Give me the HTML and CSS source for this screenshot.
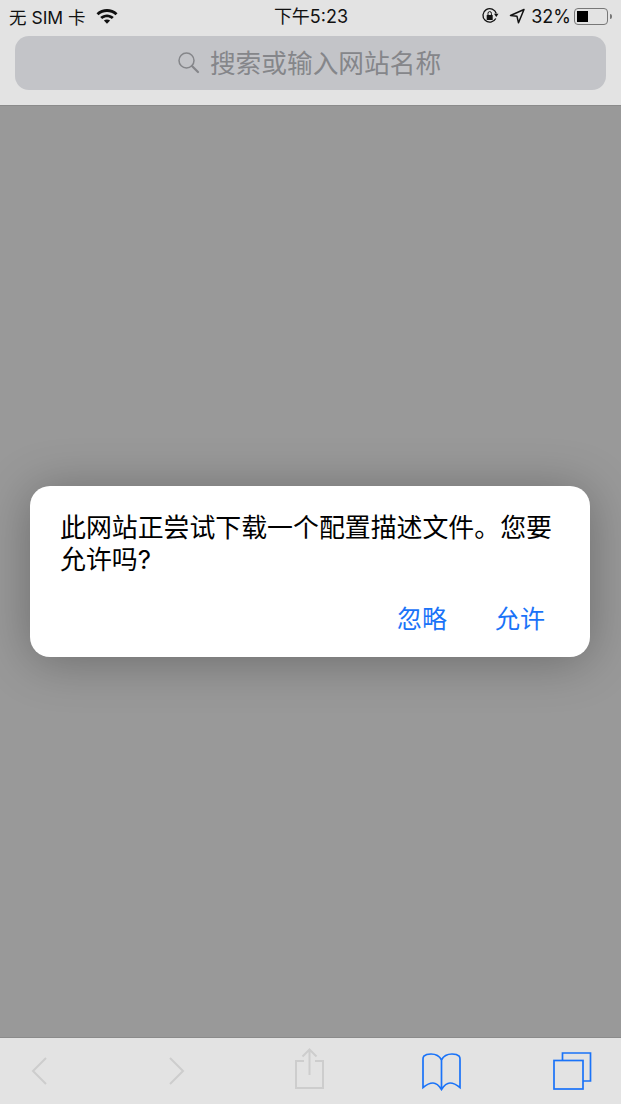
FILE: index.html
```html
<!DOCTYPE html>
<html lang="zh-CN">
<head>
    <meta charset="UTF-8">
    <meta name="viewport" content="width=device-width, initial-scale=1.0">
    <title>Safari</title>
    <link rel="stylesheet" href="styles.css">
</head>
<body>
    <header class="top-bar">
        <div class="status-bar">
            <div class="status-left">
                <span>无 SIM 卡</span>
                <svg class="wifi" width="22" height="16" viewBox="0 0 22 16">
                    <path d="M.5 5.2C6.500-.4 15.500-.4 21.500 5.200l-2 2.100C14.500 3 7.500 3 2.500 7.300z"/>
                    <path d="M4.200 9C8.200 5.500 13.800 5.500 17.800 9l-2 2.100C12.900 8.700 9.100 8.700 6.200 11.100z"/>
                    <path d="M7.900 12.500c1.900-1.400 4.300-1.400 6.200 0L11 15.800z"/>
                </svg>
            </div>
            <div class="status-time">下午5:23</div>
            <div class="status-right">
                <svg class="lock" width="18" height="18" viewBox="0 0 18 18">
                    <path d="M14.800 11.500A6.800 6.800 0 1 1 15.300 6.500" fill="none" stroke="#111" stroke-width="1.300"/>
                    <path d="M13 6.800h4.500L15.300 10z" fill="#111"/>
                    <rect x="5.700" y="8" width="6" height="5" rx=".6" fill="#111"/>
                    <path d="M7 8V6.300a1.700 1.700 0 0 1 3.400 0V8" fill="none" stroke="#111" stroke-width="1"/>
                </svg>
                <svg class="arrow" width="16" height="16" viewBox="0 0 16 16">
                    <path d="M15 1.500L1.500 7.500 8 8.300 9.500 14.800z" fill="none" stroke="#111" stroke-width="1.500" stroke-linejoin="round"/>
                </svg>
                <span class="percent">32%</span>
                <div class="battery"><div class="battery-level"></div></div>
                <div class="battery-tip"></div>
            </div>
        </div>
        <div class="search-box">
            <svg width="22" height="22" viewBox="0 0 22 22">
                <circle cx="8.500" cy="8.500" r="7.500" fill="none" stroke="#85868a" stroke-width="1.500"/>
                <path d="M14 14l6 6" stroke="#85868a" stroke-width="2.200" stroke-linecap="round"/>
            </svg>
            <span class="search-text">搜索或输入网站名称</span>
        </div>
    </header>

    <main class="page-area">
        <div class="dialog">
            <p class="dialog-text">此网站正尝试下载一个配置描述文件。您要允许吗?</p>
            <div class="dialog-actions">
                <button type="button">忽略</button>
                <button type="button">允许</button>
            </div>
        </div>
    </main>

    <footer class="toolbar">
        <svg class="tool-back" width="20" height="30" viewBox="0 0 20 30">
            <path d="M17 2L4 15l13 13" fill="none" stroke="#cdcdcd" stroke-width="2"/>
        </svg>
        <svg class="tool-forward" width="20" height="30" viewBox="0 0 20 30">
            <path d="M3 2l13 13L3 28" fill="none" stroke="#cdcdcd" stroke-width="2"/>
        </svg>
        <svg class="tool-share" width="32" height="42" viewBox="0 0 32 42">
            <path d="M10 13H2v27h27V13h-8" fill="none" stroke="#cdcdcd" stroke-width="2"/>
            <path d="M15.500 27V2M8.500 8.500l7-7 7 7" fill="none" stroke="#cdcdcd" stroke-width="2"/>
        </svg>
        <svg class="tool-book" width="40" height="38" viewBox="0 0 40 38">
            <path d="M19.500 7C17.500 3 13 1 9 1 6 1 3 2 1.800 3.200 1.200 4 1 5 1 6v28.500C4 32 8 30 11 30c3 0 6 2.500 8.500 6.500C22 32.500 25 30 28 30c3 0 7 2 10 4.500V6c0-1-.2-2-.8-2.800C36 2 33 1 30 1 26 1 21.500 3 19.500 7zM19.500 7v29" fill="none" stroke="#1a73f8" stroke-width="1.700"/>
        </svg>
        <svg class="tool-tabs" width="39" height="38" viewBox="0 0 39 38">
            <path d="M9.500 8V1h28v28H30" fill="none" stroke="#1a73f8" stroke-width="1.700"/>
            <rect x="1" y="8.500" width="29" height="28.500" fill="none" stroke="#1a73f8" stroke-width="1.700"/>
        </svg>
    </footer>
</body>
</html>
```

FILE: styles.css
```css
* {
    box-sizing: border-box;
}

body {
    margin: 0;
    width: 621px;
    height: 1104px;
    display: flex;
    flex-direction: column;
    overflow: hidden;
    background: #999;
    color: #111;
    font-family: Inter, "Noto Sans CJK SC", sans-serif;
}

.top-bar {
    height: 106px;
    flex-shrink: 0;
    background: #e3e3e3;
    border-bottom: 1px solid #8b8b8b;
}

.status-bar {
    height: 36px;
    padding: 0 9px 4px 9px;
    display: flex;
    align-items: center;
    justify-content: space-between;
    position: relative;
    font-size: 17.500px;
}

.status-left {
    display: flex;
    align-items: center;
    gap: 10px;
}

.wifi {
    fill: #111;
    margin-top: -1px;
}

/* time stays centred no matter how wide the sides are */
.status-time {
    position: absolute;
    left: 0;
    right: 0;
    top: 6px;
    text-align: center;
    font-size: 18px;
    line-height: 21px;
    padding-left: 1px;
}

.status-right {
    display: flex;
    align-items: center;
}

.lock {
    margin-right: 10px;
}

.arrow {
    margin-right: 6px;
}

.percent {
    font-size: 18px;
    margin-right: 3px;
}

.battery {
    width: 34px;
    height: 17px;
    padding: 2px;
    border: 1px solid #777;
    border-radius: 4px;
}

.battery-level {
    width: 11px;
    height: 100%;
    background: #000;
}

.battery-tip {
    width: 2px;
    height: 5px;
    margin-left: 2px;
    background: #777;
    border-radius: 0 2px 2px 0;
}

.search-box {
    height: 54px;
    margin: 0 15px;
    padding-right: 2px;
    display: flex;
    align-items: center;
    justify-content: center;
    gap: 10px;
    background: #c3c4c8;
    border-radius: 14px;
    color: #85868a;
    font-size: 25.700px;
}

.search-text {
    margin-bottom: 4px;
}

.page-area {
    flex: 1;
    padding-right: 1px;
    display: flex;
    align-items: center;
    justify-content: center;
    background: #999;
}

.dialog {
    width: 560px;
    height: 171px;
    padding: 26px 30px 0 30px;
    background: #fff;
    border-radius: 20px;
    box-shadow: 0 4px 50px rgba(0, 0, 0, 0.3);
}

.dialog-text {
    margin: 0;
    color: #000;
    font-size: 25.900px;
    line-height: 32px;
}

.dialog-actions {
    display: flex;
    justify-content: flex-end;
    gap: 48px;
    margin-top: 27px;
    padding-right: 15px;
}

.dialog-actions button {
    padding: 0;
    border: none;
    background: none;
    color: #1a73f8;
    font-family: inherit;
    font-size: 25px;
    line-height: 32px;
}

.toolbar {
    height: 67px;
    flex-shrink: 0;
    padding-left: 29px;
    display: flex;
    align-items: center;
    background: #e3e3e3;
    border-top: 1px solid #8b8b8b;
}

.tool-forward {
    margin-left: 118px;
}

.tool-share {
    margin-left: 107px;
    margin-bottom: 4px;
}

.tool-book {
    margin-left: 96px;
    margin-top: 2px;
}

.tool-tabs {
    margin-left: 91px;
}
```
